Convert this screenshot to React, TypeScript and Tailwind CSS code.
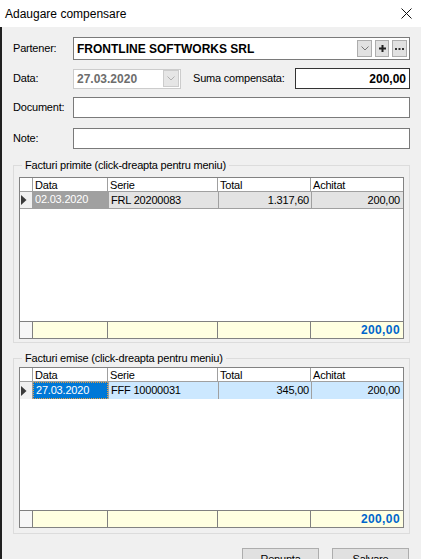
import React from 'react';

const COLS = 'grid grid-cols-[13px_75px_110px_93px_1fr]';
const HEADERS = ['Data', 'Serie', 'Total', 'Achitat'];

type Row = { data: string; serie: string; total: string; achitat: string };

function RowMarker() {
  return (
    <svg width="6" height="10" viewBox="0 0 6 10" className="ml-[1px]">
      <polygon points="0,0 5.5,5 0,10" fill="#3a3a3a" />
    </svg>
  );
}

function InvoiceGrid({ row, variant, height }: { row: Row; variant: 'gray' | 'blue'; height: string }) {
  const cellBg = variant === 'gray' ? 'bg-[#e3e3e3]' : 'bg-[#cce8ff]';
  const firstCell =
    variant === 'gray'
      ? 'bg-[#a0a0a0] text-white'
      : 'bg-[#0078d7] text-white border border-dotted border-[#e8a040]';

  return (
    <div className={`flex flex-col border border-[#828282] bg-white ${height}`}>
      <div className={`${COLS} h-[14px] shrink-0 border-b border-[#a0a0a0] bg-white`}>
        <div className="border-r border-[#a0a0a0]" />
        {HEADERS.map((h, i) => (
          <div
            key={h}
            className={`pl-[2px] leading-[14px] ${i < HEADERS.length - 1 ? 'border-r border-[#a0a0a0]' : ''}`}
          >
            {h}
          </div>
        ))}
      </div>

      <div className={`${COLS} h-[17px] shrink-0 border-b border-[#a0a0a0]`}>
        <div className="flex items-center border-r border-[#a0a0a0] bg-[#f0f0f0]">
          <RowMarker />
        </div>
        <div className={`pl-[2px] leading-[15px] ${firstCell}`}>{row.data}</div>
        <div className={`border-l border-[#a0a0a0] pl-[2px] leading-[16px] ${cellBg}`}>{row.serie}</div>
        <div className={`border-l border-[#a0a0a0] pr-[2px] text-right leading-[16px] ${cellBg}`}>{row.total}</div>
        <div className={`border-l border-[#a0a0a0] pr-[3px] text-right leading-[16px] ${cellBg}`}>{row.achitat}</div>
      </div>

      <div className="flex-1" />

      <div className={`${COLS} h-[17px] shrink-0 border-t border-[#808080] bg-[#ffffe1]`}>
        <div className="border-r border-[#808080] bg-[#f7f7f7]" />
        <div className="border-r border-[#808080]" />
        <div className="border-r border-[#808080]" />
        <div className="border-r border-[#808080]" />
        <div className="pr-[3px] text-right text-[12px] font-bold leading-[16px] tracking-[0.4px] text-[#0066cc]">
          200,00
        </div>
      </div>
    </div>
  );
}

function GroupBox({ title, className, children }: { title: string; className: string; children: React.ReactNode }) {
  return (
    <div className={`relative shrink-0 border border-[#dcdcdc] pl-[5px] pr-[5px] ${className}`}>
      <span className="absolute -top-[8px] left-[8px] bg-[#f0f0f0] px-[3px] leading-[14px]">{title}</span>
      {children}
    </div>
  );
}

export default function App() {
  return (
    <div className="h-[559px] w-[421px] overflow-hidden bg-[#f0f0f0] text-[11px] tracking-[-0.2px] text-black [font-family:'Liberation_Sans',Arial,sans-serif]">
      <div className="flex h-[27px] items-center justify-between bg-white pl-[5px] pr-[9px]">
        <span className="text-[12px] tracking-normal">Adaugare compensare</span>
        <svg width="11" height="11" viewBox="0 0 11 11">
          <path d="M0.5 0.5 L10.5 10.5 M10.5 0.5 L0.5 10.5" stroke="#111" strokeWidth="1" />
        </svg>
      </div>

      <div className="flex min-h-[560px] flex-col border-l-2 border-[#202020] pl-[11px] pr-[11px]">
        {/* Partener */}
        <div className="mt-[10px] flex h-[23px] shrink-0 items-center">
          <span className="w-[60px]">Partener:</span>
          <div className="flex h-full flex-1 items-center border border-[#7a7a7a] bg-white pl-[3px] pr-[2px]">
            <span className="flex-1 text-[12px] font-bold tracking-normal">FRONTLINE SOFTWORKS SRL</span>
            <div className="flex h-[17px] w-[15px] items-center justify-center border border-[#adadad] bg-[#e1e1e1]">
              <svg width="8" height="5" viewBox="0 0 8 5">
                <path d="M0.5 0.5 L4 4 L7.5 0.5" fill="none" stroke="#777" strokeWidth="1" />
              </svg>
            </div>
            <div className="ml-[3px] flex h-[17px] w-[14px] items-center justify-center border border-[#adadad] bg-[#e1e1e1]">
              <svg width="7" height="7" viewBox="0 0 7 7">
                <path d="M3.5 0 V7 M0 3.5 H7" stroke="#222" strokeWidth="2" />
              </svg>
            </div>
            <div className="ml-[3px] flex h-[17px] w-[15px] items-center justify-center border border-[#adadad] bg-[#e1e1e1]">
              <svg width="9" height="2" viewBox="0 0 9 2">
                <rect x="0" y="0" width="2" height="2" fill="#333" />
                <rect x="3.5" y="0" width="2" height="2" fill="#333" />
                <rect x="7" y="0" width="2" height="2" fill="#333" />
              </svg>
            </div>
          </div>
        </div>

        {/* Data + Suma */}
        <div className="mt-[8px] flex h-[21px] shrink-0 items-center">
          <span className="w-[60px]">Data:</span>
          <div className="flex h-[20px] w-[108px] items-center border border-[#cccccc] bg-white pl-[3px] pr-[1px]">
            <span className="flex-1 text-[12px] font-bold tracking-normal text-[#6d6d6d]">27.03.2020</span>
            <div className="flex h-[17px] w-[16px] items-center justify-center border border-[#cccccc] bg-[#e6e6e6]">
              <svg width="8" height="5" viewBox="0 0 8 5">
                <path d="M0.5 0.5 L4 4 L7.5 0.5" fill="none" stroke="#b0b0b0" strokeWidth="1" />
              </svg>
            </div>
          </div>
          <span className="ml-[12px]">Suma compensata:</span>
          <div className="ml-auto flex h-full w-[115px] items-center justify-end border border-[#333] bg-white pr-[3px]">
            <span className="text-[12px] font-bold tracking-normal">200,00</span>
          </div>
        </div>

        {/* Document */}
        <div className="mt-[8px] flex h-[21px] shrink-0 items-center">
          <span className="w-[60px]">Document:</span>
          <div className="h-full flex-1 border border-[#7a7a7a] bg-white" />
        </div>

        {/* Note */}
        <div className="mt-[10px] flex h-[21px] shrink-0 items-center">
          <span className="w-[60px]">Note:</span>
          <div className="h-full flex-1 border border-[#7a7a7a] bg-white" />
        </div>

        <GroupBox title="Facturi primite (click-dreapta pentru meniu)" className="mt-[16px] pt-[11px] pb-[3px]">
          <InvoiceGrid
            variant="gray"
            height="h-[162px]"
            row={{ data: '02.03.2020', serie: 'FRL 20200083', total: '1.317,60', achitat: '200,00' }}
          />
        </GroupBox>

        <GroupBox title="Facturi emise (click-dreapta pentru meniu)" className="mt-[15px] pt-[8px] pb-[5px]">
          <InvoiceGrid
            variant="blue"
            height="h-[161px]"
            row={{ data: '27.03.2020', serie: 'FFF 10000031', total: '345,00', achitat: '200,00' }}
          />
        </GroupBox>

        <div className="mt-[14px] flex shrink-0 justify-end gap-[13px] pr-[1px]">
          <button className="h-[23px] w-[77px] border border-[#adadad] bg-[#e1e1e1] leading-[21px]">Renunta</button>
          <button className="h-[23px] w-[77px] border border-[#adadad] bg-[#e1e1e1] leading-[21px]">Salvare</button>
        </div>
      </div>
    </div>
  );
}
